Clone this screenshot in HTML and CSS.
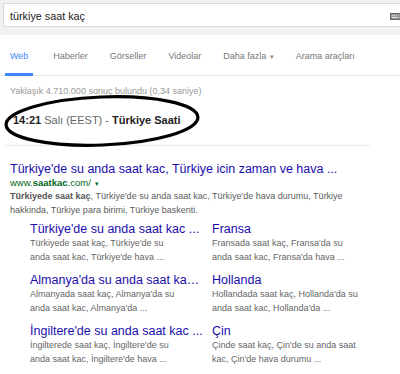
FILE: index.html
```html
<!DOCTYPE html>
<html lang="tr">
<head>
<meta charset="utf-8">
<link rel="stylesheet" href="styles.css">
</head>
<body>
<div class="page">
  <header class="top">
    <div class="searchbox">
      <span class="query">türkiye saat kaç</span>
      <svg class="kbd" width="10" height="7" viewBox="0 0 10 7"><rect x="0.5" y="0.5" width="10" height="6" fill="#9a9a9a" stroke="#666"/><rect x="2" y="2" width="1" height="1" fill="#ddd"/><rect x="4" y="2" width="1" height="1" fill="#ddd"/><rect x="6" y="2" width="1" height="1" fill="#ddd"/><rect x="2" y="4" width="6" height="1" fill="#ddd"/></svg>
    </div>
  </header>
  <nav class="tabs">
    <span class="tab active">Web</span>
    <span class="tab">Haberler</span>
    <span class="tab">Görseller</span>
    <span class="tab">Videolar</span>
    <span class="tab">Daha fazla <span class="caret">▾</span></span>
    <span class="tab">Arama araçları</span>
  </nav>
  <main class="results">
    <div class="stats">Yaklaşık 4.710.000 sonuç bulundu (0,34 saniye)</div>
    <div class="answer"><b>14:21</b> Salı (EEST) - <b>Türkiye Saati</b></div>
    <svg class="circle" width="214" height="64" viewBox="0 0 214 64"><ellipse cx="102" cy="32" rx="96" ry="24" transform="rotate(-2.3 102 32)" fill="none" stroke="#000" stroke-width="3.2"/></svg>
    <div class="divider"></div>
    <div class="result">
      <a class="title">Türkiye'de su anda saat kac, Türkiye icin zaman ve hava ...</a>
      <div class="url">www.<b>saatkac</b>.com/ <span class="arrow">▾</span></div>
      <div class="snippet"><b>Türkiyede saat kaç</b>, Türkiye'de su anda saat kac, Türkiye'de hava durumu, Türkiye hakkinda, Türkiye para birimi, Türkiye baskenti.</div>
      <div class="sitelinks">
        <div class="sl">
          <a class="sl-title">Türkiye'de su anda saat kac ...</a>
          <div class="sl-text">Türkiyede saat kaç, Türkiye'de su<br>anda saat kac, Türkiye'de hava ...</div>
        </div>
        <div class="sl">
          <a class="sl-title">Fransa</a>
          <div class="sl-text">Fransada saat kaç, Fransa'da su<br>anda saat kac, Fransa'da hava ...</div>
        </div>
        <div class="sl">
          <a class="sl-title">Almanya'da su anda saat ka…</a>
          <div class="sl-text">Almanyada saat kaç, Almanya'da su<br>anda saat kac, Almanya'da ...</div>
        </div>
        <div class="sl">
          <a class="sl-title">Hollanda</a>
          <div class="sl-text">Hollandada saat kaç, Hollanda'da su<br>anda saat kac, Hollanda'da ...</div>
        </div>
        <div class="sl">
          <a class="sl-title">İngiltere'de su anda saat kac ...</a>
          <div class="sl-text">İngilterede saat kaç, İngiltere'de su<br>anda saat kac, İngiltere'de hava ...</div>
        </div>
        <div class="sl">
          <a class="sl-title">Çin</a>
          <div class="sl-text">Çinde saat kaç, Çin'de su anda saat<br>kac, Çin'de hava durumu ...</div>
        </div>
      </div>
      <a class="more">saatkac.com alanından daha fazla sonuç »</a>
    </div>
  </main>
</div>
</body>
</html>
```
FILE: styles.css
```css
html, body {
  margin: 0;
  padding: 0;
  background: #fff;
  overflow: hidden;
}
body {
  font-family: "Liberation Sans", Arial, sans-serif;
  width: 400px;
  height: 374px;
}
.page {
  position: relative;
}
.top {
  background: #f1f1f1;
  padding: 3px 0 8px 3px;
}
.searchbox {
  background: #fff;
  border: 1px solid #dadada;
  border-right: none;
  height: 22px;
  display: flex;
  align-items: center;
  justify-content: space-between;
  padding-left: 6px;
}
.query {
  font-size: 10.8px;
  color: #222;
  padding-top: 1px;
}
.kbd {
  margin-top: 3px;
  display: block;
}
.tabs {
  display: flex;
  gap: 12px;
  padding-left: 5px;
  height: 41px;
  box-sizing: border-box;
  border-bottom: 1px solid #ebebeb;
}
.tab {
  font-size: 9px;
  line-height: 12px;
  color: #777;
  padding: 15px 5px 0;
  height: 41px;
  box-sizing: border-box;
  white-space: nowrap;
}
.tab.active {
  color: #4285f4;
  border-bottom: 3px solid #4285f4;
}
.tab:nth-child(2) {
  padding-left: 8px;
}
.caret {
  font-size: 7px;
  color: #888;
  margin-left: 1px;
}
.results {
  position: relative;
  padding: 9px 0 0 10px;
}
.stats {
  font-size: 9px;
  line-height: 12px;
  color: #999;
}
.answer {
  margin-top: 16px;
  font-size: 11px;
  line-height: 14px;
  color: #666;
  padding-left: 3px;
}
.answer b {
  color: #222;
}
.circle {
  position: absolute;
  left: 0;
  top: 13px;
}
.divider {
  margin-top: 18px;
  margin-left: -5px;
  width: 365px;
  border-top: 1px solid #ebebeb;
}
.result {
  margin-top: 16px;
}
.title {
  display: block;
  font-size: 12.5px;
  line-height: 15px;
  color: #1a0dab;
  white-space: nowrap;
}
.url {
  font-size: 9.5px;
  line-height: 12px;
  color: #006621;
}
.arrow {
  font-size: 7px;
  margin-left: 2px;
}
.snippet {
  font-size: 9px;
  line-height: 13.5px;
  color: #5c5c5c;
  width: 350px;
}
.snippet b {
  color: #555;
}
.sitelinks {
  margin-top: 5px;
  padding-left: 20px;
  display: grid;
  grid-template-columns: 182px 170px;
  row-gap: 9px;
}
.sl-title {
  display: block;
  font-size: 12.5px;
  line-height: 15px;
  color: #1a0dab;
  white-space: nowrap;
}
.sl-text {
  font-size: 9px;
  line-height: 13.5px;
  color: #666;
  white-space: nowrap;
}
.more {
  display: block;
  margin-top: 7px;
  padding-left: 20px;
  font-size: 9.5px;
  line-height: 12px;
  color: #1a0dab;
}
```
